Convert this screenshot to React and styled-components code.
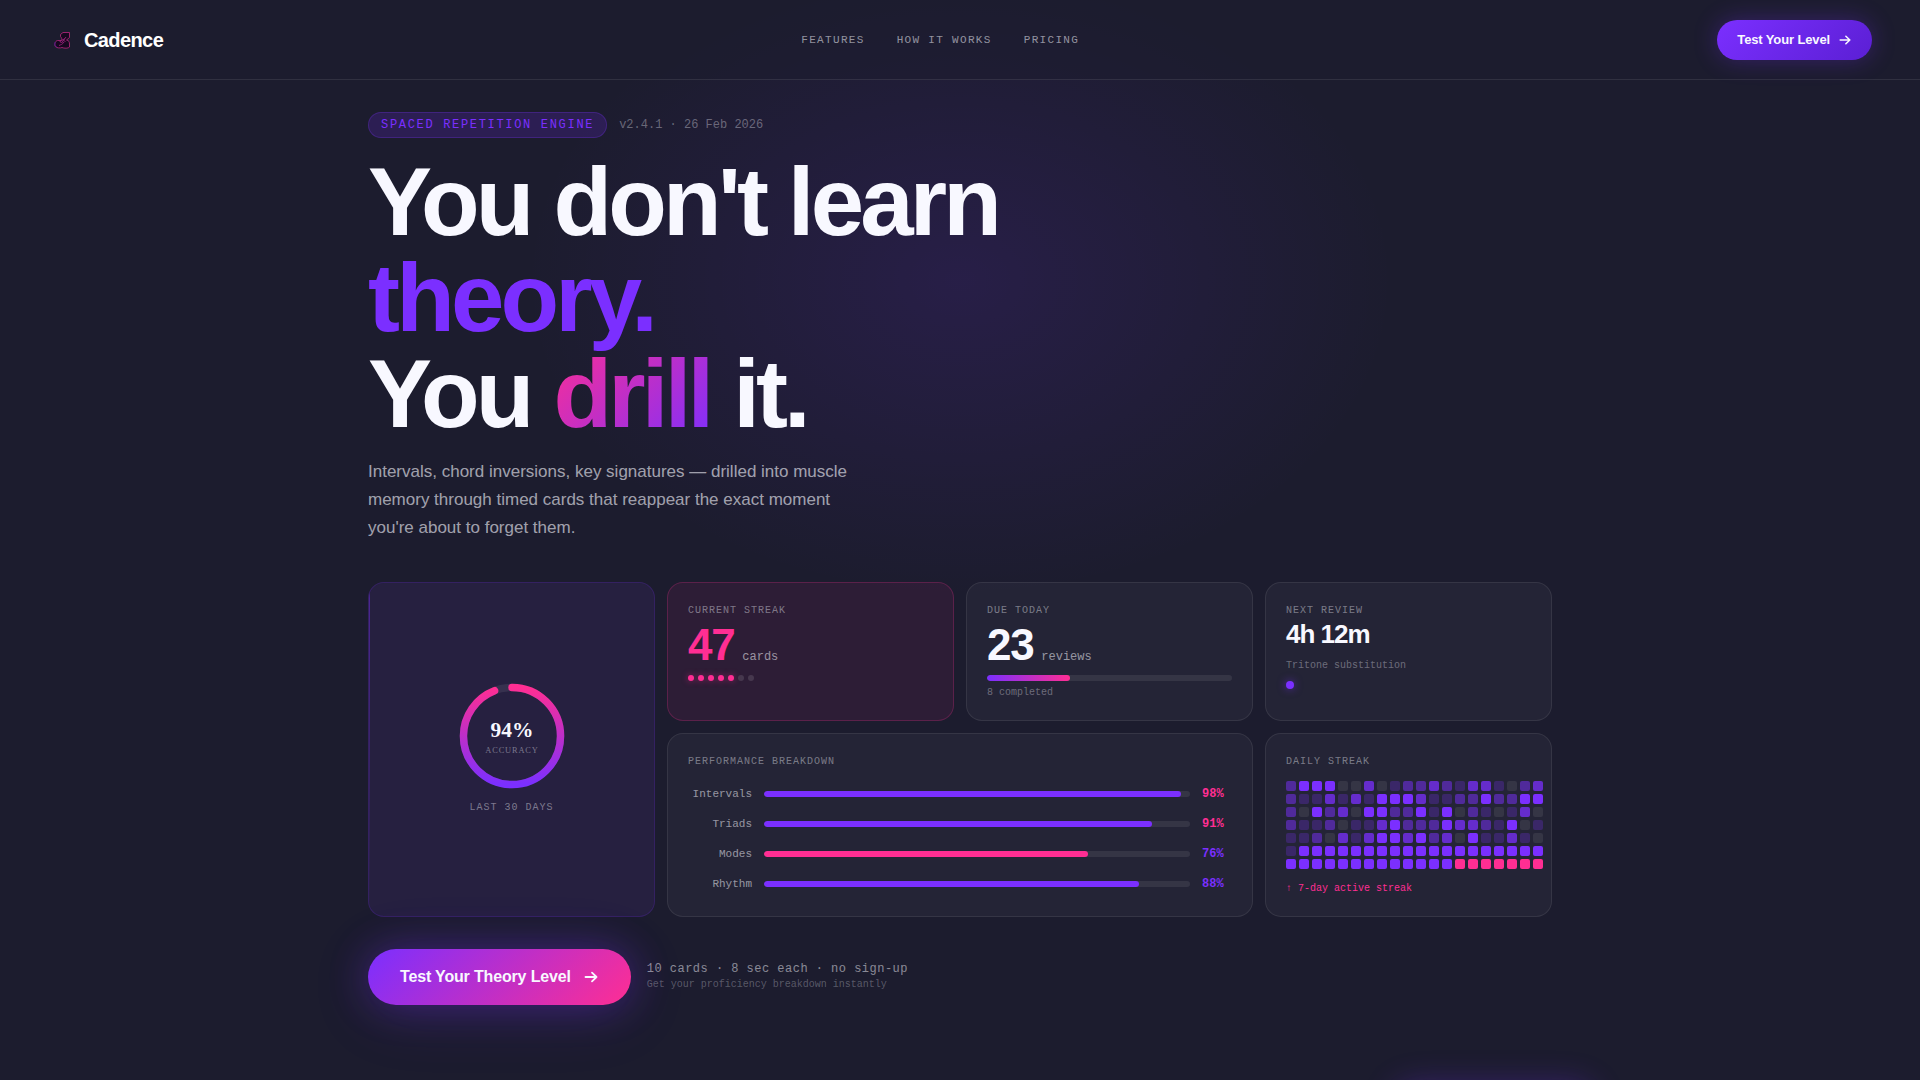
import React from "react";
import styled, { createGlobalStyle, css } from "styled-components";

const sans = `"Liberation Sans", Arial, sans-serif`;
const mono = `"Liberation Mono", "Courier New", monospace`;
const serif = `"Liberation Serif", "Times New Roman", serif`;
const violet = "#7b2fff";
const pink = "#ff2e93";

const GlobalStyle = createGlobalStyle`
  *, *::before, *::after { box-sizing: border-box; }
  body {
    margin: 0;
    background: #1c1c2e;
    color: #f8f8ff;
    font-family: ${sans};
    font-size: 16px;
    line-height: 1.5;
  }
  h1, h2, p, ul { margin: 0; padding: 0; }
  ul { list-style: none; }
`;

const Page = styled.div`
  position: relative;
  isolation: isolate;
  min-height: 100vh;
  overflow: hidden;
`;

const HeroGlow = styled.div`
  position: absolute;
  z-index: -1;
  top: -40px;
  left: 50%;
  width: 880px;
  height: 640px;
  transform: translateX(-50%);
  background: radial-gradient(ellipse, rgba(123, 47, 255, 0.12), transparent 70%);
  pointer-events: none;
`;

const CornerGlow = styled.div`
  position: absolute;
  z-index: -1;
  top: 1084px;
  right: 17%;
  width: 200px;
  height: 40px;
  border-radius: 20px;
  box-shadow: 0 0 32px rgba(123, 47, 255, 0.3);
  pointer-events: none;
`;

const Header = styled.header`
  display: flex;
  align-items: center;
  justify-content: space-between;
  height: 80px;
  padding: 0 48px;
  background: rgba(28, 28, 46, 0.5);
  border-bottom: 1px solid rgba(255, 255, 255, 0.09);
`;

const Brand = styled.a`
  display: flex;
  align-items: center;
  gap: 12px;
  color: #ffffff;
  font-size: 20px;
  font-weight: 700;
  letter-spacing: -0.03em;
  text-decoration: none;
`;

const NavLinks = styled.nav`
  display: flex;
  gap: 32px;
  padding-top: 2px;
`;

const NavLink = styled.a`
  color: rgba(248, 248, 255, 0.55);
  font-family: ${mono};
  font-size: 11px;
  letter-spacing: 0.12em;
  text-decoration: none;
  text-transform: uppercase;
`;

const PillButton = styled.button`
  display: inline-flex;
  align-items: center;
  border: 0;
  border-radius: 28px;
  color: #f8f8ff;
  font-family: ${sans};
  font-weight: 700;
  letter-spacing: -0.01em;
  cursor: pointer;
  ${({ $large }) =>
    $large
      ? css`
          gap: 12px;
          height: 56px;
          padding: 0 32px;
          font-size: 16px;
          background: linear-gradient(135deg, ${violet}, ${pink});
          box-shadow: 0 0 40px rgba(123, 47, 255, 0.3), 0 8px 64px rgba(123, 47, 255, 0.15);
        `
      : css`
          gap: 8px;
          height: 40px;
          padding: 0 20px;
          font-size: 13px;
          background: linear-gradient(135deg, ${violet}, #5b1fd4);
          box-shadow: 0 0 24px rgba(123, 47, 255, 0.3);
        `}
`;

const Main = styled.main`
  max-width: 1280px;
  margin: 0 auto;
  padding: 32px 48px 72px;
`;

const Meta = styled.div`
  display: flex;
  align-items: center;
  gap: 12px;
  font-family: ${mono};
  font-size: 12px;
  color: rgba(248, 248, 255, 0.35);
`;

const Tag = styled.span`
  padding: 3px 12px;
  border: 1px solid rgba(123, 47, 255, 0.25);
  border-radius: 13px;
  background: rgba(123, 47, 255, 0.18);
  color: ${violet};
  letter-spacing: 0.14em;
`;

const Title = styled.h1`
  margin-top: 16px;
  font-size: 96px;
  font-weight: 700;
  line-height: 1;
  letter-spacing: -0.04em;
`;

const Violet = styled.span`
  color: ${violet};
`;

const Drill = styled.span`
  background: linear-gradient(135deg, ${pink}, ${violet});
  background-clip: text;
  color: transparent;
`;

const Lead = styled.p`
  max-width: 500px;
  margin-top: 16px;
  color: rgba(248, 248, 255, 0.62);
  font-size: 17px;
  line-height: 28px;
`;

const Grid = styled.section`
  display: grid;
  grid-template-columns: repeat(4, minmax(0, 1fr));
  gap: 12px;
  margin-top: 40px;
`;

const tones = {
  plain: css`
    border-color: rgba(255, 255, 255, 0.08);
    background: rgba(255, 255, 255, 0.04);
  `,
  pink: css`
    border-color: rgba(255, 46, 147, 0.22);
    background: rgba(255, 46, 147, 0.08);
  `,
  violet: css`
    border-color: rgba(123, 47, 255, 0.18);
    background: rgba(123, 64, 224, 0.1);
  `,
};

const Card = styled.article`
  padding: 20px;
  border: 1px solid;
  border-radius: 16px;
  ${({ $tone = "plain" }) => tones[$tone]}
  ${({ $wide }) => $wide && "grid-column: span 2;"}
`;

const AccuracyCard = styled(Card)`
  position: relative;
  display: flex;
  grid-row: span 2;
  flex-direction: column;
  align-items: center;
  justify-content: center;
  gap: 8px;
  padding-bottom: 24px;
  overflow: hidden;

  &::before {
    content: "";
    position: absolute;
    inset: 0 auto 0 0;
    width: 1px;
    background: linear-gradient(${violet}, transparent);
    opacity: 0.45;
  }
`;

const Label = styled.h2`
  color: rgba(248, 248, 255, 0.42);
  font-family: ${mono};
  font-size: 10px;
  font-weight: 400;
  line-height: 15px;
  letter-spacing: 0.1em;
  text-transform: uppercase;
`;

const noteColors = {
  muted: "rgba(248, 248, 255, 0.35)",
  faint: "rgba(248, 248, 255, 0.28)",
  pink,
};

const Note = styled.p`
  margin-top: ${({ $gap }) => $gap}px;
  color: ${({ $color = "muted" }) => noteColors[$color]};
  font-family: ${mono};
  font-size: 10px;
  line-height: 15px;
`;

const Figure = styled.p`
  display: flex;
  align-items: baseline;
  gap: 8px;
  margin-top: 4px;
  line-height: 45px;
`;

const FigureValue = styled.strong`
  color: ${({ $pink }) => ($pink ? pink : "#f8f8ff")};
  font-size: 44px;
  letter-spacing: -0.03em;
`;

const FigureUnit = styled.span`
  color: rgba(248, 248, 255, 0.55);
  font-family: ${mono};
  font-size: 12px;
  line-height: 18px;
`;

const Countdown = styled.p`
  margin-top: 4px;
  font-size: 26px;
  font-weight: 700;
  line-height: 24px;
  letter-spacing: -1px;
`;

const Dots = styled.div`
  display: flex;
  gap: 4px;
  margin-top: 8px;
`;

const Dot = styled.span`
  width: 6px;
  height: 6px;
  border-radius: 50%;
  background: ${({ $on }) => ($on ? pink : "rgba(255, 255, 255, 0.12)")};
  box-shadow: ${({ $on }) => ($on ? "0 0 6px rgba(255, 46, 147, 0.5)" : "none")};
`;

const PulseDot = styled.span`
  display: block;
  width: 8px;
  height: 8px;
  margin-top: 8px;
  border-radius: 50%;
  background: ${violet};
  box-shadow: 0 0 8px rgba(123, 47, 255, 0.6);
`;

const Track = styled.div`
  flex: 1;
  height: 6px;
  margin-top: ${({ $gap = 0 }) => $gap}px;
  border-radius: 3px;
  background: rgba(255, 255, 255, 0.08);
  overflow: hidden;
`;

const fills = {
  violet,
  pink,
  blend: `linear-gradient(90deg, ${violet}, ${pink})`,
};

const Fill = styled.div`
  height: 100%;
  border-radius: 3px;
  background: ${({ $fill }) => fills[$fill]};
`;

const Skills = styled.ul`
  display: grid;
  gap: 12px;
  margin-top: 16px;
`;

const Skill = styled.li`
  display: flex;
  align-items: center;
  gap: 12px;
  font-family: ${mono};
  line-height: 18px;
`;

const SkillName = styled.span`
  width: 64px;
  color: rgba(248, 248, 255, 0.55);
  font-size: 11px;
  text-align: right;
`;

const SkillScore = styled.strong`
  width: 30px;
  color: ${({ $high }) => ($high ? pink : violet)};
  font-size: 12px;
`;

const Heatmap = styled.div`
  display: grid;
  grid-template-columns: repeat(20, 10px);
  grid-auto-rows: 10px;
  gap: 3px;
  margin-top: 12px;
`;

const heat = {
  0: "rgba(255, 255, 255, 0.08)",
  1: "rgba(123, 47, 255, 0.25)",
  2: "rgba(123, 47, 255, 0.5)",
  3: "rgba(123, 47, 255, 0.75)",
  4: violet,
  P: pink,
};

const Cell = styled.span`
  border-radius: 2px;
  background: ${({ $level }) => heat[$level]};
`;

const Actions = styled.div`
  display: flex;
  align-items: center;
  gap: 16px;
  margin-top: 32px;
`;

const Details = styled.div`
  padding-bottom: 1px;
`;

const Terms = styled.p`
  color: rgba(248, 248, 255, 0.5);
  font-family: ${mono};
  font-size: 12px;
  line-height: 16px;
  letter-spacing: 0.04em;
`;

const RingValue = styled.text`
  fill: #f8f8ff;
  font-family: ${serif};
  font-size: 23px;
  font-weight: 700;
`;

const RingLabel = styled.text`
  fill: rgba(248, 248, 255, 0.4);
  font-family: ${serif};
  font-size: 9px;
  letter-spacing: 0.1em;
`;

const Arrow = ({ size }) => (
  <svg width={size} height={size} viewBox="0 0 16 16" fill="none" stroke="currentColor" strokeWidth="1.8" strokeLinecap="round" strokeLinejoin="round" aria-hidden="true">
    <path d="M2.500 8h11M9 3.700l4.500 4.300-4.500 4.300" />
  </svg>
);

const Logo = () => (
  <svg width="24" height="24" viewBox="0 0 24 24" fill="#170820" stroke="#b0267a" strokeWidth="1" strokeLinejoin="round" aria-hidden="true">
    <path d="M12.500 6.500 15 4.500h6.500v5l-3 2.500c2.500.5 3 2 3 4v3c-1 1.500-5.500 1.500-7.500.5-2 .8-5 .5-6.500-.8C6 17 7 13 9.500 12.500l3.500 0c1.500-1 .5-3-.5-4z" strokeOpacity=".85" />
    <path d="M10.500 12 13.500 15l4.500-6M11 17.500c2-1 3.500-1 5-3.500M14.500 11l3 3M12 13.500l5-3" fill="none" stroke="#8d1f72" />
    <path d="M7.500 14c-1.500 1.500-.5 4.500 1.500 5" fill="none" stroke="#4b1d8c" />
  </svg>
);

const circumference = 2 * Math.PI * 52;

const AccuracyRing = ({ value }) => (
  <svg width="112" height="112" viewBox="0 0 120 120" role="img" aria-label={`${value}% accuracy`}>
    <defs>
      <linearGradient id="ring" x1="1" y1="0" x2="0" y2="0">
        <stop offset="0" stopColor={pink} />
        <stop offset="1" stopColor={violet} />
      </linearGradient>
    </defs>
    <g fill="none" strokeWidth="8" transform="rotate(-90 60 60)">
      <circle cx="60" cy="60" r="52" stroke="rgba(255,255,255,0.08)" />
      <circle cx="60" cy="60" r="52" stroke="url(#ring)" strokeLinecap="round" strokeDasharray={`${(circumference * value) / 100} ${circumference}`} />
    </g>
    <RingValue x="60" y="61" textAnchor="middle">{value}%</RingValue>
    <RingLabel x="60" y="78" textAnchor="middle">ACCURACY</RingLabel>
  </svg>
);

const skills = [
  { name: "Intervals", score: 98, fill: "violet" },
  { name: "Triads", score: 91, fill: "violet" },
  { name: "Modes", score: 76, fill: "pink" },
  { name: "Rhythm", score: 88, fill: "violet" },
];

const days = [
  "24440030122321331023",
  "21131314443112242244",
  "20423044224140210130",
  "21120113422243321401",
  "11203134434230411310",
  "14444444444444444444",
  "4444444444444PPPPPPP",
].join("");

export default function App() {
  return (
    <>
      <GlobalStyle />
      <Page>
        <HeroGlow />
        <CornerGlow />
        <Header>
          <Brand href="#">
            <Logo />
            Cadence
          </Brand>
          <NavLinks>
            <NavLink href="#features">Features</NavLink>
            <NavLink href="#how">How it works</NavLink>
            <NavLink href="#pricing">Pricing</NavLink>
          </NavLinks>
          <PillButton type="button">
            Test Your Level
            <Arrow size={14} />
          </PillButton>
        </Header>

        <Main>
          <Meta>
            <Tag>SPACED REPETITION ENGINE</Tag>
            <span>v2.4.1 · 26 Feb 2026</span>
          </Meta>
          <Title>
            You don't learn
            <br />
            <Violet>theory.</Violet>
            <br />
            You <Drill>drill</Drill> it.
          </Title>
          <Lead>
            Intervals, chord inversions, key signatures — drilled into muscle memory through timed
            cards that reappear the exact moment you're about to forget them.
          </Lead>

          <Grid>
            <AccuracyCard $tone="violet">
              <AccuracyRing value={94} />
              <Label as="p">Last 30 days</Label>
            </AccuracyCard>

            <Card $tone="pink">
              <Label>Current streak</Label>
              <Figure>
                <FigureValue $pink>47</FigureValue>
                <FigureUnit>cards</FigureUnit>
              </Figure>
              <Dots>
                {[1, 1, 1, 1, 1, 0, 0].map((on, i) => (
                  <Dot key={i} $on={on} />
                ))}
              </Dots>
            </Card>

            <Card>
              <Label>Due today</Label>
              <Figure>
                <FigureValue>23</FigureValue>
                <FigureUnit>reviews</FigureUnit>
              </Figure>
              <Track $gap={8}>
                <Fill $fill="blend" style={{ width: "34%" }} />
              </Track>
              <Note $gap={4}>8 completed</Note>
            </Card>

            <Card>
              <Label>Next review</Label>
              <Countdown>4h 12m</Countdown>
              <Note $gap={12}>Tritone substitution</Note>
              <PulseDot />
            </Card>

            <Card $wide>
              <Label>Performance breakdown</Label>
              <Skills>
                {skills.map(({ name, score, fill }) => (
                  <Skill key={name}>
                    <SkillName>{name}</SkillName>
                    <Track>
                      <Fill $fill={fill} style={{ width: `${score}%` }} />
                    </Track>
                    <SkillScore $high={score > 90}>{score}%</SkillScore>
                  </Skill>
                ))}
              </Skills>
            </Card>

            <Card>
              <Label>Daily streak</Label>
              <Heatmap>
                {[...days].map((level, i) => (
                  <Cell key={i} $level={level} />
                ))}
              </Heatmap>
              <Note $gap={12} $color="pink">↑ 7-day active streak</Note>
            </Card>
          </Grid>

          <Actions>
            <PillButton type="button" $large>
              Test Your Theory Level
              <Arrow size={16} />
            </PillButton>
            <Details>
              <Terms>10 cards · 8 sec each · no sign-up</Terms>
              <Note $gap={0} $color="faint">Get your proficiency breakdown instantly</Note>
            </Details>
          </Actions>
        </Main>
      </Page>
    </>
  );
}
